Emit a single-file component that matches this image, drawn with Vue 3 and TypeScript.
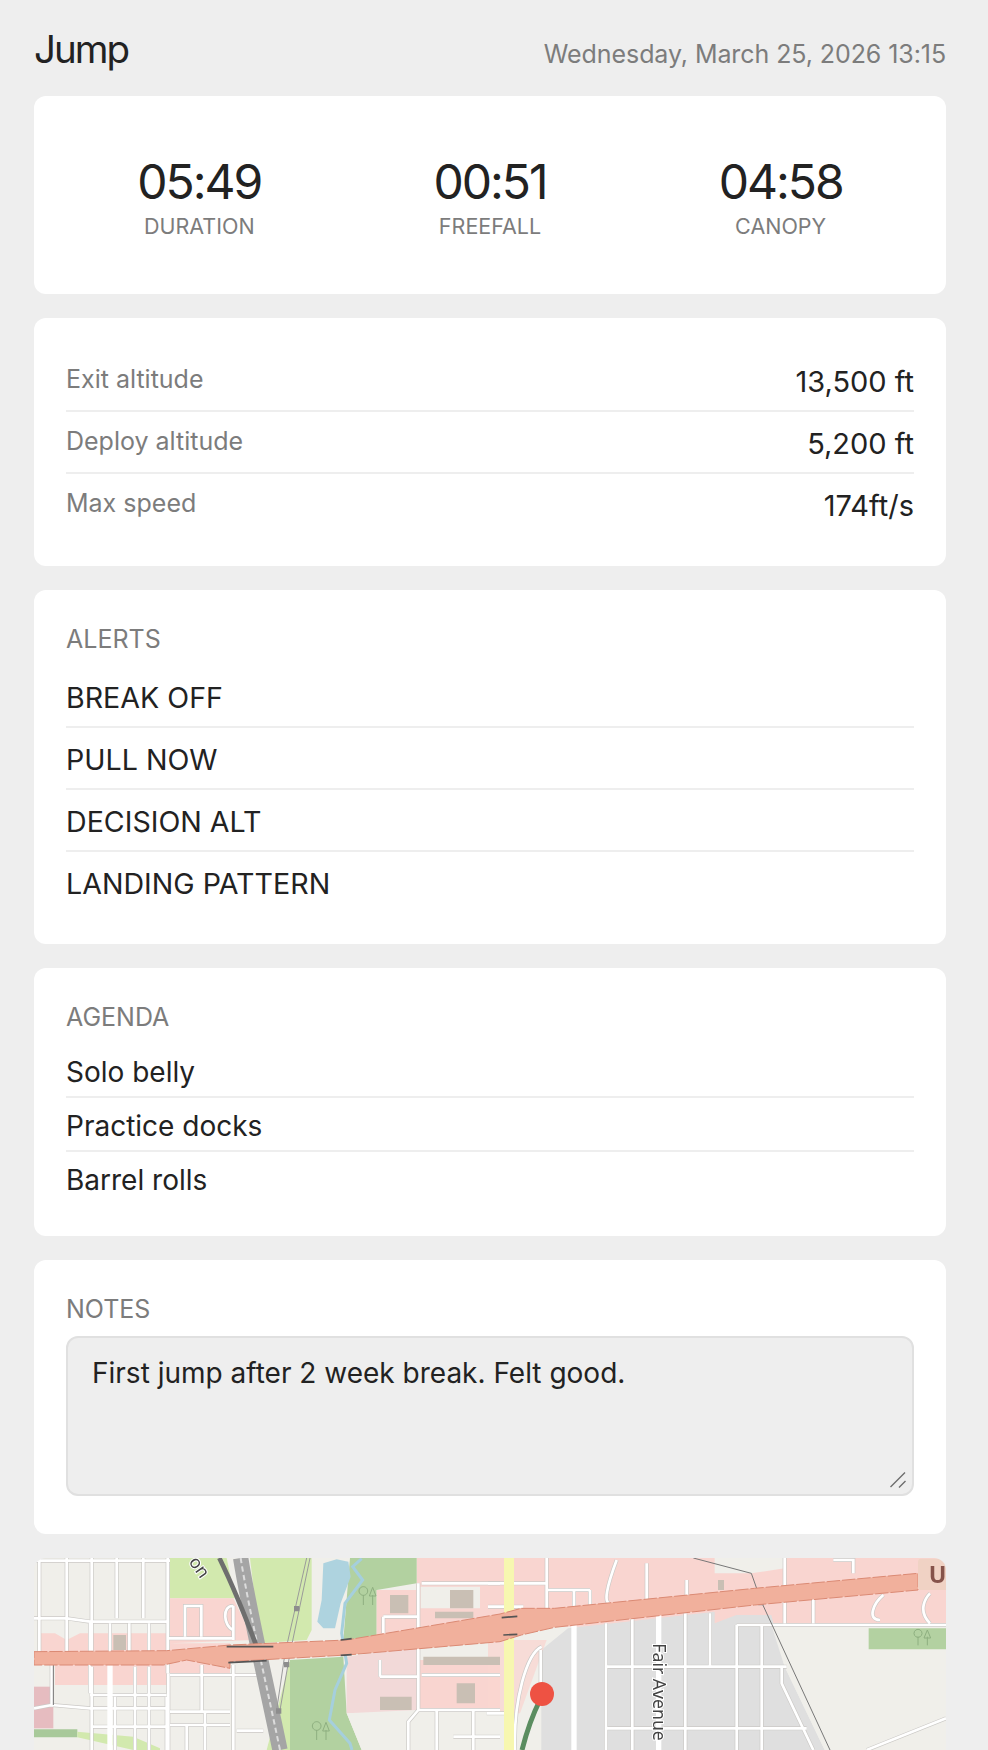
<template>
  <div class="page">
    <header class="top">
      <h1 class="title">Jump</h1>
      <span class="date">Wednesday, March 25, 2026 13:15</span>
    </header>

    <section class="card stats">
      <div v-for="s in stats" :key="s.label" class="stat">
        <div class="stat-value">{{ s.value }}</div>
        <div class="stat-label">{{ s.label }}</div>
      </div>
    </section>

    <section class="card details">
      <div v-for="d in details" :key="d.label" class="row">
        <span class="row-label">{{ d.label }}</span>
        <span class="row-value">{{ d.value }}</span>
      </div>
    </section>

    <section class="card alerts">
      <h2 class="heading">ALERTS</h2>
      <div v-for="a in alerts" :key="a" class="item alert-item">{{ a }}</div>
    </section>

    <section class="card agenda">
      <h2 class="heading">AGENDA</h2>
      <div v-for="a in agenda" :key="a" class="item agenda-item">{{ a }}</div>
    </section>

    <section class="card notes">
      <h2 class="heading">NOTES</h2>
      <div class="notes-wrap">
        <textarea class="notes-box" :value="notes"></textarea>
        <svg class="grip" width="16" height="16" viewBox="0 0 16 16">
          <path d="M0.5 15L15 0.5M9 15.5L15.5 9" fill="none" stroke="#6e6e6e" stroke-width="1.4" />
        </svg>
      </div>
    </section>

    <section class="map">
      <svg class="map-svg" viewBox="102 54 2736 576" preserveAspectRatio="none">
        <rect x="102" y="54" width="2736" height="576" fill="#f0efea" />
        <!-- landuse -->
        <path fill="#f9d5d0" d="M1250 54H2900V260H1250Z" />
        <path fill="#f0efea" d="M1262 140H1440V205H1262ZM2144 54V100H2254L2354 85V54Z" />
        <path fill="#dfdfdf" d="M1624 330L1704 265L2144 215V250L2209 225H2314L2354 380L2474 630H1624Z" />
        <path fill="#f0efea" d="M2314 255H2838V630H2474L2354 380Z" />
        <path fill="#b3d1a1" d="M2606 265H2838V328H2606Z" />
        <path fill="#d2e9ae" d="M510 54H680L705 175H510ZM750 54H935V270L920 300L780 310Z" />
        <path fill="#f9d5d0" d="M510 175H700L760 300L510 310ZM510 310H690V400H510Z" />
        <path fill="#d2e9ae" d="M800 630L870 360H880V630Z" />
        <path fill="#b2d1a0" d="M1050 54H1250V130L1130 150V290L1030 300ZM870 360L1030 350L1040 520L1085 630H870Z" />
        <path fill="#f2d9d8" d="M1040 350L1250 320V510L1040 520Z" />
        <path fill="#f9d5d0" d="M1130 150H1250V285L1130 295ZM1250 360H1500V510H1250Z" />
        <path fill="#f9d5d0" d="M120 280H165L200 300L240 280H500V335H120ZM165 375H500V435H165Z" />
        <path fill="#e6bcc0" d="M102 440H160V565H102Z" />
        <path fill="#a8c99a" d="M102 568H232V592H102Z" />
        <path fill="#d2e9ae" d="M232 575L400 590L480 625V630H400L232 592Z" />
        <path fill="#f0efea" d="M1250 510H1500V630H1250ZM1040 520H1250V630H1085Z" />
        <path fill="#f9d5d0" d="M1464 300H1640L1560 520H1464Z" opacity=".75" />

        <!-- water -->
        <path fill="#aed3df" d="M970 70L1010 58L1045 65L1052 110L1022 190L1005 265L970 265L952 245L965 180Z" />
        <path fill="none" stroke="#a5cfdd" stroke-width="9" d="M1085 56L1058 80L1088 120L1035 190L1025 280L1040 370L1005 450L988 540L1050 610L1056 630" />

        <!-- minor roads -->
        <g fill="none" stroke="#cbc9c6" stroke-width="12">
          <path v-for="(d, i) in minorRoads" :key="i" :d="d" />
        </g>
        <g fill="none" stroke="#fff" stroke-width="8">
          <path v-for="(d, i) in minorRoads" :key="i" :d="d" />
        </g>
        <path fill="none" stroke="#fff" stroke-width="16" d="M330 370V630M1976 225V630M1722 250V630" />

        <!-- buildings -->
        <path fill="#c9bfb4" d="M1170 165H1225V220H1170ZM1140 470H1235V510H1140ZM1370 430H1425V490H1370ZM1270 350H1500V375H1270ZM1350 150H1420V205H1350ZM340 285H378V330H340ZM2154 120H2172V150H2154ZM1305 215H1420V235H1305Z" />

        <!-- railway and power lines -->
        <path fill="none" stroke="#a5a5a5" stroke-width="46" d="M722 54C745 200 790 390 840 630" />
        <path fill="none" stroke="#dcdcdc" stroke-width="6" stroke-dasharray="16 10" d="M722 54C745 200 790 390 840 630" />
        <path fill="none" stroke="#6e6e6e" stroke-width="14" d="M658 54C700 140 740 240 770 320" />
        <path fill="none" stroke="#9a9a9a" stroke-width="3" d="M920 54L855 340L830 510M930 54L870 340L840 510" />
        <path fill="none" stroke="#777" stroke-width="3" d="M2080 54L2254 100L2284 185L2490 630M160 345V495" />
        <path fill="#8d8d8d" d="M882 198H898V214H882ZM852 366H868V382H852ZM828 505H844V521H828ZM2275 180H2291V196H2275Z" />

        <!-- yellow road -->
        <path fill="none" stroke="#f7f7b0" stroke-width="30" d="M1527 54L1527 240M1527 285V630" />

        <!-- highway -->
        <path
          fill="#f1b09c"
          stroke="#db8a74"
          stroke-width="3"
          stroke-dasharray="40 6"
          d="M102 335L500 332L690 315L1040 300L1500 222L1564 205L1664 205L2264 145L2754 100V150L2264 195L1664 262L1564 285L1500 305L1040 345L690 365V385L560 360L490 375L102 375Z"
        />
        <path fill="none" stroke="#555" stroke-width="5" d="M680 320H820M685 368L800 362M1022 300L1055 296M1022 346L1055 344M1505 233L1552 229M1510 285L1552 283" />

        <!-- trees -->
        <g fill="none" stroke="#8eaf80" stroke-width="3">
          <path d="M1090 165V195M1118 165V195M1090 140a13 13 0 1 0 .1 0ZM1118 142L1108 168H1128Z" />
          <path d="M950 570V600M978 570V600M950 545a13 13 0 1 0 .1 0ZM978 547L968 573H988Z" />
          <path d="M2754 290V316M2782 290V316M2754 268a12 12 0 1 0 .1 0ZM2782 270L2772 294H2792Z" />
        </g>

        <!-- shield -->
        <rect x="2754" y="56" width="120" height="94" rx="10" fill="#f0d2c4" />
        <text class="shield-text" x="2786" y="128">US</text>

        <!-- labels -->
        <text class="map-label" transform="translate(1958 310) rotate(90)">Fair Avenue</text>
        <text class="map-label" transform="translate(565 65) rotate(55)">on</text>

        <!-- track -->
        <path fill="none" stroke="#5b8d60" stroke-width="15" d="M1620 480C1595 530 1580 575 1566 630" />
        <circle cx="1626" cy="462" r="36" fill="#ee5243" />
      </svg>
    </section>
  </div>
</template>

<script setup lang="ts">
interface Stat {
  value: string
  label: string
}

const stats: Stat[] = [
  { value: '05:49', label: 'DURATION' },
  { value: '00:51', label: 'FREEFALL' },
  { value: '04:58', label: 'CANOPY' },
]

const details = [
  { label: 'Exit altitude', value: '13,500 ft' },
  { label: 'Deploy altitude', value: '5,200 ft' },
  { label: 'Max speed', value: '174ft/s' },
]

const alerts: string[] = ['BREAK OFF', 'PULL NOW', 'DECISION ALT', 'LANDING PATTERN']
const agenda: string[] = ['Solo belly', 'Practice docks', 'Barrel rolls']
const notes = 'First jump after 2 week break. Felt good.'

// street grid, in the same coordinates as the svg viewBox
const minorRoads: string[] = [
  'M118 54V335M200 54V335M275 54V335M350 54V235M430 54V235M503 54V400',
  'M102 62H510M102 235H200L270 245H503M270 245V460M330 250V335M388 250V335M447 250V335',
  'M155 375V500M102 505L155 495L270 505H500M275 380V630M345 470V630M405 380V630M447 380V630M500 470V630',
  'M270 465H500M275 560H500',
  'M503 295H700M510 405H770M510 515H690M605 375V515M510 555H690M505 400V630M560 555V630M615 515V630M700 375V630',
  'M555 290V198H604V290M700 270C670 260 665 195 700 198M700 198V300',
  'M710 572H790M1265 130H1500M1255 130V510M1150 230H1255M1150 230V280',
  'M1140 410H1255M1140 410V360M1255 510H1500M1255 510L1225 545V630M1310 510V630M1420 510V630M1360 590H1500M1265 405H1500',
  'M1464 130H1640M1640 54V215M1464 200H1570M1640 150H1770M1770 150V200M1850 60C1820 140 1810 190 1830 190M1940 70V180M2060 120V180',
  'M1460 520H1530M1625 320C1580 340 1540 480 1545 630M1622 330V480',
  'M1722 150V210M1818 250V630M1897 235V630M2056 220V630M2130 220V380M2210 255V630M2285 255V630',
  'M1818 380H2360M1818 565H2420M2345 380V430L2440 630',
  'M2210 255H2838M2354 54V250M2440 250V160M2640 240C2600 240 2620 190 2650 165M2790 250C2750 210 2780 170 2790 160M2500 60L2560 60V100',
  'M2600 630L2838 535',
]
</script>

<style scoped>
.page {
  box-sizing: border-box;
  height: 1750px;
  overflow: hidden;
  padding: 0 42px 0 34px;
  font-family: Inter, "Liberation Sans", sans-serif;
  color: #222;
}

.top {
  display: flex;
  align-items: baseline;
  justify-content: space-between;
  height: 96px;
  padding-top: 25px;
  box-sizing: border-box;
}

.title {
  margin: 0;
  font-size: 38.5px;
  font-weight: 400;
  line-height: 48px;
  letter-spacing: -2px;
}

.date {
  font-size: 25px;
  line-height: 32px;
  letter-spacing: -0.08px;
  color: #7c7c7c;
}

.card {
  box-sizing: border-box;
  background: #fff;
  border-radius: 12px;
  padding: 32px;
  margin-bottom: 24px;
}

.stats {
  display: grid;
  grid-template-columns: repeat(3, 1fr);
  height: 198px;
  padding: 60px 20px 0;
}

.stat {
  text-align: center;
}

.stat-value {
  font-size: 48px;
  line-height: 52px;
  letter-spacing: -2px;
}

.stat-label {
  font-size: 21.5px;
  line-height: 28px;
  margin-top: 4px;
  color: #7c7c7c;
}

.details {
  height: 248px;
}

.row {
  display: flex;
  justify-content: space-between;
  height: 62px;
  box-sizing: border-box;
  border-bottom: 2px solid #eee;
}

.row:last-child {
  border-bottom: none;
}

.row-label {
  font-size: 25px;
  line-height: 59px;
  color: #7c7c7c;
}

.row-value {
  font-size: 29px;
  line-height: 64px;
}

.heading {
  margin: 0 0 11px;
  font-size: 25px;
  font-weight: 400;
  line-height: 32px;
  color: #7c7c7c;
}

.item {
  font-size: 28px;
  box-sizing: border-box;
  border-bottom: 2px solid #eee;
}

.item:last-child {
  border-bottom: none;
}

.alerts {
  height: 354px;
  padding-top: 33px;
}

.alert-item {
  height: 62px;
  font-size: 28.6px;
  line-height: 64px;
}

.agenda {
  height: 268px;
  padding-top: 33px;
}

.agenda-item {
  height: 54px;
  line-height: 56px;
}

.notes {
  height: 274px;
  padding-top: 33px;
}

.notes-wrap {
  position: relative;
  height: 160px;
}

.notes-box {
  display: block;
  box-sizing: border-box;
  width: 100%;
  height: 100%;
  padding: 18px 24px;
  background: #eee;
  border: 2px solid #e0e0e0;
  border-radius: 12px;
  font: inherit;
  font-size: 28px;
  color: #222;
  outline: none;
  resize: none;
}

.grip {
  position: absolute;
  right: 8px;
  bottom: 8px;
}

.map {
  height: 192px;
  border-radius: 12px 12px 0 0;
  overflow: hidden;
}

.map-svg {
  display: block;
  width: 100%;
  height: 100%;
  filter: blur(0.7px);
}

.map-label {
  font-family: "Noto Sans", sans-serif;
  font-size: 53px;
  fill: #444;
  stroke: #fff;
  stroke-width: 6px;
  paint-order: stroke;
}

.shield-text {
  font-family: "Noto Sans", sans-serif;
  font-size: 70px;
  font-weight: 700;
  fill: #85534a;
}
</style>

<style>
body {
  background: #eee;
}
</style>
